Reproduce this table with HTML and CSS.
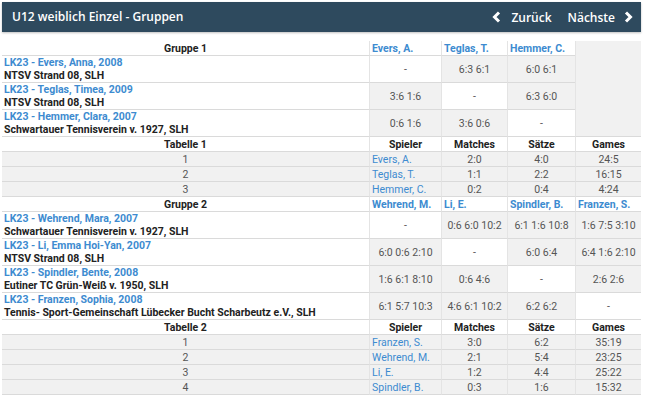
FILE: index.html
```html
<!DOCTYPE html>
<html lang="de">
<head>
<meta charset="utf-8">
<title>U12 weiblich Einzel - Gruppen</title>
<link rel="stylesheet" href="styles.css">
</head>
<body>
<div class="page">
  <header class="bar">
    <h1 class="title">U12 weiblich Einzel - Gruppen</h1>
    <nav class="nav">
      <a class="nav-link prev" href="#"><svg class="chev" viewBox="0 0 9 12" width="9" height="12"><polyline points="7,1.5 2.5,6 7,10.5"/></svg>Zurück</a>
      <a class="nav-link next" href="#">Nächste<svg class="chev" viewBox="0 0 9 12" width="9" height="12"><polyline points="2,1.5 6.5,6 2,10.5"/></svg></a>
    </nav>
  </header>

  <table class="grid">
    <colgroup>
      <col class="c-name"><col class="c-a"><col class="c-b"><col class="c-c"><col class="c-d">
    </colgroup>
    <tbody>
      <tr class="s">
        <th class="sec">Gruppe 1</th>
        <th class="opp">Evers, A.</th>
        <th class="opp">Teglas, T.</th>
        <th class="opp">Hemmer, C.</th>
        <td class="filler" rowspan="4"></td>
      </tr>
      <tr class="d">
        <td class="player"><a class="pname" href="#">LK23 - Evers, Anna, 2008</a><span class="club">NTSV Strand 08, SLH</span></td>
        <td class="res self">-</td>
        <td class="res">6:3 6:1</td>
        <td class="res">6:0 6:1</td>
      </tr>
      <tr class="d">
        <td class="player"><a class="pname" href="#">LK23 - Teglas, Timea, 2009</a><span class="club">NTSV Strand 08, SLH</span></td>
        <td class="res">3:6 1:6</td>
        <td class="res self">-</td>
        <td class="res">6:3 6:0</td>
      </tr>
      <tr class="d">
        <td class="player"><a class="pname" href="#">LK23 - Hemmer, Clara, 2007</a><span class="club">Schwartauer Tennisverein v. 1927, SLH</span></td>
        <td class="res">0:6 1:6</td>
        <td class="res">3:6 0:6</td>
        <td class="res self">-</td>
      </tr>

      <tr class="s">
        <th class="sec">Tabelle 1</th>
        <th class="hd">Spieler</th>
        <th class="hd">Matches</th>
        <th class="hd">Sätze</th>
        <th class="hd">Games</th>
      </tr>
      <tr class="s rank"><td class="pos">1</td><td class="pl"><a href="#">Evers, A.</a></td><td>2:0</td><td>4:0</td><td>24:5</td></tr>
      <tr class="s rank"><td class="pos">2</td><td class="pl"><a href="#">Teglas, T.</a></td><td>1:1</td><td>2:2</td><td>16:15</td></tr>
      <tr class="s rank"><td class="pos">3</td><td class="pl"><a href="#">Hemmer, C.</a></td><td>0:2</td><td>0:4</td><td>4:24</td></tr>

      <tr class="s">
        <th class="sec">Gruppe 2</th>
        <th class="opp">Wehrend, M.</th>
        <th class="opp">Li, E.</th>
        <th class="opp">Spindler, B.</th>
        <th class="opp">Franzen, S.</th>
      </tr>
      <tr class="d">
        <td class="player"><a class="pname" href="#">LK23 - Wehrend, Mara, 2007</a><span class="club">Schwartauer Tennisverein v. 1927, SLH</span></td>
        <td class="res self">-</td>
        <td class="res">0:6 6:0 10:2</td>
        <td class="res">6:1 1:6 10:8</td>
        <td class="res">1:6 7:5 3:10</td>
      </tr>
      <tr class="d">
        <td class="player"><a class="pname" href="#">LK23 - Li, Emma Hoi-Yan, 2007</a><span class="club">NTSV Strand 08, SLH</span></td>
        <td class="res">6:0 0:6 2:10</td>
        <td class="res self">-</td>
        <td class="res">6:0 6:4</td>
        <td class="res">6:4 1:6 2:10</td>
      </tr>
      <tr class="d">
        <td class="player"><a class="pname" href="#">LK23 - Spindler, Bente, 2008</a><span class="club">Eutiner TC Grün-Weiß v. 1950, SLH</span></td>
        <td class="res">1:6 6:1 8:10</td>
        <td class="res">0:6 4:6</td>
        <td class="res self">-</td>
        <td class="res">2:6 2:6</td>
      </tr>
      <tr class="d">
        <td class="player"><a class="pname" href="#">LK23 - Franzen, Sophia, 2008</a><span class="club">Tennis- Sport-Gemeinschaft Lübecker Bucht Scharbeutz e.V., SLH</span></td>
        <td class="res">6:1 5:7 10:3</td>
        <td class="res">4:6 6:1 10:2</td>
        <td class="res">6:2 6:2</td>
        <td class="res self">-</td>
      </tr>

      <tr class="s">
        <th class="sec">Tabelle 2</th>
        <th class="hd">Spieler</th>
        <th class="hd">Matches</th>
        <th class="hd">Sätze</th>
        <th class="hd">Games</th>
      </tr>
      <tr class="s rank"><td class="pos">1</td><td class="pl"><a href="#">Franzen, S.</a></td><td>3:0</td><td>6:2</td><td>35:19</td></tr>
      <tr class="s rank"><td class="pos">2</td><td class="pl"><a href="#">Wehrend, M.</a></td><td>2:1</td><td>5:4</td><td>23:25</td></tr>
      <tr class="s rank"><td class="pos">3</td><td class="pl"><a href="#">Li, E.</a></td><td>1:2</td><td>4:4</td><td>25:22</td></tr>
      <tr class="s rank"><td class="pos">4</td><td class="pl"><a href="#">Spindler, B.</a></td><td>0:3</td><td>1:6</td><td>15:32</td></tr>
    </tbody>
  </table>
</div>
</body>
</html>
```

FILE: styles.css
```css
html, body {
  margin: 0;
  padding: 0;
  background: #ffffff;
}

body {
  padding: 2px;
  font-family: Roboto, "Liberation Sans", Arial, sans-serif;
  font-size: 10.5px;
  color: #222222;
}

.page {
  width: 639px;
}

/* ---------- header bar ---------- */
.bar {
  height: 30px;
  background: #2e4a5e;
  color: #ffffff;
  display: flex;
  align-items: center;
  justify-content: space-between;
  padding: 0 8px 0 10px;
  box-shadow: 0 1px 2px rgba(0, 0, 0, 0.25);
  font-family: "Open Sans", "Noto Sans", sans-serif;
}

.title {
  margin: 0;
  font-size: 12px;
  font-weight: 600;
  line-height: 30px;
}

.nav {
  display: flex;
  align-items: center;
  gap: 16px;
}

.nav-link {
  display: flex;
  align-items: center;
  color: #ffffff;
  text-decoration: none;
  font-size: 12px;
  font-weight: 600;
}

.prev .chev { margin-right: 10px; }
.next .chev { margin-left: 9px; }

.chev polyline {
  fill: none;
  stroke: #ffffff;
  stroke-width: 3;
  stroke-linecap: butt;
  stroke-linejoin: miter;
}

/* ---------- table ---------- */
.grid {
  margin-top: 9px;
  width: 639px;
  table-layout: fixed;
  border-collapse: separate;
  border-spacing: 0;
}

.c-name { width: 367px; }
.c-a { width: 72px; }
.c-b { width: 66px; }
.c-c { width: 68px; }
.c-d { width: 66px; }

.grid th,
.grid td {
  padding: 0 2px;
  line-height: 13px;
  border-bottom: 1px solid #dadada;
  border-left: 1px solid #e4e4e4;
  background: #ffffff;
  vertical-align: middle;
  white-space: nowrap;
  overflow: hidden;
}

.grid tr > :first-child {
  border-left: 0;
}

.grid tr.s > th,
.grid tr.s > td {
  padding-top: 1px;
}

.grid th {
  font-weight: 700;
  color: #222222;
}

.grid a {
  color: #3d8bd0;
  text-decoration: none;
}

.grid th.sec {
  text-align: center;
}

.grid th.opp {
  text-align: left;
  color: #3d8bd0;
}

.grid th.hd {
  text-align: center;
}

.grid td.filler {
  background: #f1f1f1;
}

.grid td.player {
  text-align: left;
}

.pname {
  display: block;
  font-weight: 700;
}

.club {
  display: block;
  font-weight: 700;
  color: #222222;
}

.grid td.res {
  text-align: center;
  color: #555555;
  background: #f1f1f1;
}

.grid td.res.self {
  background: #ffffff;
}

.grid .rank td {
  background: #f1f1f1;
  text-align: center;
  color: #555555;
}

.grid .rank td.pl {
  text-align: left;
}
```
